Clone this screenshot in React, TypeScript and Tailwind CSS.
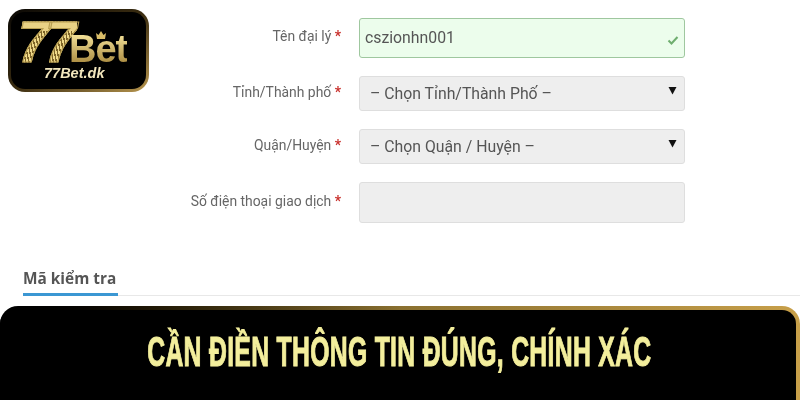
import React from "react";

const fields = [
  { label: "Tên đại lý", height: "h-[40px]", mt: "mt-0", kind: "valid", value: "cszionhn001" },
  { label: "Tỉnh/Thành phố", height: "h-[35px]", mt: "mt-[18px]", kind: "select", value: "– Chọn Tỉnh/Thành Phố –" },
  { label: "Quận/Huyện", height: "h-[35px]", mt: "mt-[18px]", kind: "select", value: "– Chọn Quận / Huyện –" },
  { label: "Số điện thoại giao dịch", height: "h-[41px]", mt: "mt-[18px]", kind: "empty", value: "" },
];

function Logo() {
  return (
    <div className="absolute left-[8px] top-[9px] w-[141px] h-[83px] rounded-[17px] p-[3px] bg-gradient-to-br from-[#0a0805] via-[#3a2c10] to-[#b9974f]">
      <div className="relative w-full h-full rounded-[14px] bg-black">
        <span className="absolute left-[7px] top-[7px] font-['Liberation_Sans',sans-serif] font-bold italic text-[57px] leading-[46px] tracking-[-5px] pr-[6px] [-webkit-text-stroke:1.2px_#b89f52] text-transparent bg-clip-text bg-[linear-gradient(#e9d285_0,#e9d285_26%,transparent_26%),repeating-linear-gradient(78deg,#efd98a_0px,#efd98a_1.6px,#7d6428_1.6px,#7d6428_3px)]">
          77
        </span>
        <span className="absolute left-[58px] top-[22px] font-['Liberation_Sans',sans-serif] font-bold text-[38px] leading-[30px] tracking-[-1px] text-transparent bg-clip-text bg-gradient-to-b from-[#f5e39a] to-[#a98a3f]">
          Bet
        </span>
        <svg className="absolute left-[84px] top-[19px]" width="12" height="9" viewBox="0 0 12 9">
          <path d="M1 2l2.5 2L6 0l2.5 4L11 2l-1 6H2z" fill="#d9bd68" />
        </svg>
        <span className="absolute left-[33px] top-[54px] font-['Liberation_Sans',sans-serif] font-bold italic text-[14.5px] leading-[14px] text-[#f3e7bd]">
          77Bet.dk
        </span>
      </div>
    </div>
  );
}

function Field({ field }: { field: (typeof fields)[number] }) {
  const box =
    field.kind === "valid"
      ? "bg-[#ecfdec] border-[#9fc79f] text-[#555555] pl-[5px]"
      : "bg-[#eeeeee] border-[#dedede] text-[#555555] pl-[10px]";
  return (
    <div className={`flex items-center ${field.mt}`}>
      <div className="w-[341px] pb-[3px] text-right text-[13.9px] text-[#666666]">
        {field.label} <span className="text-[#c9302c] font-bold">*</span>
      </div>
      <div className={`ml-[18px] w-[326px] ${field.height} flex items-center justify-between border rounded-[3px] text-[15.8px] ${box}`}>
        <span>{field.value}</span>
        {field.kind === "valid" && (
          <svg className="mr-[5px] mt-[3px]" width="12" height="10" viewBox="0 0 12 10" fill="none">
            <path d="M1.5 5.5L4.5 8.5L10.5 2" stroke="#6fae6f" strokeWidth="2" />
          </svg>
        )}
        {field.kind === "select" && (
          <svg className="mr-[7px] mb-[6px]" width="9" height="9" viewBox="0 0 9 9">
            <path d="M0.5 1H8.5L4.5 8.5Z" fill="#111111" />
          </svg>
        )}
      </div>
    </div>
  );
}

export default function App() {
  return (
    <div className="relative w-[800px] h-[400px] overflow-hidden bg-white flex flex-col font-['Roboto',sans-serif] blur-[0.3px]">
      <Logo />
      <div className="pt-[18px] flex flex-col">
        {fields.map((f) => (
          <Field key={f.label} field={f} />
        ))}
      </div>
      <div className="mt-[45px] ml-[23px] border-b border-[#e8e8e8] h-[28px]">
        <div className="w-[95px] h-[28px] pt-[1px] border-b-[3px] border-[#3b97d3] font-['Open_Sans',sans-serif] font-bold text-[15.4px] leading-[20px] text-[#555555] whitespace-nowrap">
          Mã kiểm tra
        </div>
      </div>
      <div className="mt-[10px] flex-1 rounded-t-[18px] pt-[4px] pr-[4px] bg-gradient-to-r from-[#000000] via-[#8a7030] to-[#c8a04a]">
        <div className="h-full rounded-tl-[14px] rounded-tr-[14px] bg-black flex justify-center pt-[17px] pl-[3px]">
          <span className="inline-block scale-x-[0.59] font-['Liberation_Sans',sans-serif] font-bold text-[42px] leading-[50px] tracking-[0.5px] [-webkit-text-stroke:1px_#f3ee9c] text-[#f3ee9c] whitespace-nowrap">
            CẦN ĐIỀN THÔNG TIN ĐÚNG, CHÍNH XÁC
          </span>
        </div>
      </div>
    </div>
  );
}
